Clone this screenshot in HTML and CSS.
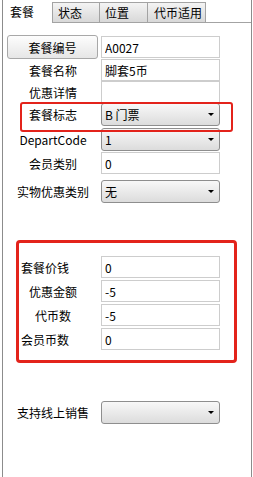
FILE: index.html
```html
<!DOCTYPE html>
<html lang="zh-CN">
<head>
  <meta charset="UTF-8">
  <meta name="viewport" content="width=device-width, initial-scale=1.0">
  <title>套餐</title>
  <link rel="stylesheet" href="styles.css">
</head>
<body>
<div class="frame">
  <div class="tabs">
    <div class="tab active">套餐</div>
    <div class="tab tab-state">状态</div>
    <div class="tab tab-pos">位置</div>
    <div class="tab tab-coin">代币适用</div>
    <div class="tab-rest"></div>
  </div>

  <div class="form">
    <div class="row">
      <button class="btn">套餐编号</button>
      <input class="field" type="text" value="A0027">
    </div>
    <div class="row">
      <label class="lbl">套餐名称</label>
      <input class="field" type="text" value="脚套5币">
    </div>
    <div class="row gap0">
      <label class="lbl">优惠详情</label>
      <input class="field" type="text" value="">
    </div>
    <div class="row sel gap0 marked">
      <label class="lbl">套餐标志</label>
      <div class="select"><span>B 门票</span><i class="arrow"></i></div>
    </div>
    <div class="row sel gap2">
      <label class="lbl">DepartCode</label>
      <div class="select"><span>1</span><i class="arrow"></i></div>
    </div>
    <div class="row">
      <label class="lbl">会员类别</label>
      <input class="field" type="text" value="0">
    </div>
    <div class="row sel gap6">
      <label class="lbl">实物优惠类别</label>
      <div class="select"><span>无</span><i class="arrow"></i></div>
    </div>

    <div class="group">
      <div class="row">
        <label class="lbl left">套餐价钱</label>
        <input class="field" type="text" value="0">
      </div>
      <div class="row">
        <label class="lbl">优惠金额</label>
        <input class="field" type="text" value="-5">
      </div>
      <div class="row">
        <label class="lbl">代币数</label>
        <input class="field" type="text" value="-5">
      </div>
      <div class="row">
        <label class="lbl left">会员币数</label>
        <input class="field" type="text" value="0">
      </div>
    </div>

    <div class="row sel online">
      <label class="lbl">支持线上销售</label>
      <div class="select"><span></span><i class="arrow"></i></div>
    </div>
  </div>
</div>
</body>
</html>
```

FILE: styles.css
```css
*{
  margin: 0;
  padding: 0;
  box-sizing: border-box;
}
body{
  font-family: "Noto Sans CJK SC", "Liberation Sans", sans-serif;
  font-size: 12px;
  color: #000;
  background: #fff;
}
.frame{
  margin-left: 2px;
  width: 250px;
  height: 477px;
  border-left: 1px solid #8c8c8c;
  border-right: 1px solid #8c8c8c;
}

/* tabs */
.tabs{
  display: flex;
  height: 23px;
}
.tab{
  height: 21px;
  margin-top: 2px;
  padding-left: 5px;
  line-height: 20px;
  border: 1px solid #a3a3a3;
  background: linear-gradient(#f4f4f4, #d8d8d8);
  white-space: nowrap;
}
.tab.active{
  width: 49px;
  height: 23px;
  margin-top: 0;
  padding-left: 7px;
  line-height: 23px;
  border: none;
  background: #fff;
}
.tab-state{
  width: 48px;
}
.tab-pos{
  width: 49px;
  margin-left: -1px;
}
.tab-coin{
  width: 59px;
  margin-left: -1px;
  padding-left: 6px;
}
.tab-rest{
  flex: 1;
  border-bottom: 1px solid #a3a3a3;
}

/* form rows */
.form{
  padding-top: 12px;
}
.row{
  display: flex;
  align-items: center;
  height: 22px;
  margin-top: 1px;
}
.row.sel{
  height: 23px;
}
.row.gap0{
  margin-top: 0;
}
.row.gap2{
  margin-top: 2px;
}
.row.gap6{
  margin-top: 6px;
}
.lbl{
  width: 74px;
  margin-left: 13px;
  margin-right: 11px;
  text-align: center;
  white-space: nowrap;
}
.btn{
  width: 91px;
  height: 24px;
  margin-left: 4px;
  margin-right: 3px;
  font: inherit;
  color: #000;
  border: 1px solid #a8a8a8;
  border-radius: 3px;
  background: linear-gradient(#fdfdfd, #e6e6e6);
}
.field{
  width: 119px;
  height: 22px;
  padding: 0 3px;
  font: inherit;
  color: #000;
  border: 1px solid #cdcdcd;
  background: #fff;
  outline: none;
}
.select{
  width: 119px;
  height: 23px;
  display: flex;
  align-items: center;
  justify-content: space-between;
  padding: 0 5px 0 3px;
  border: 1px solid #8e8e8e;
  border-radius: 3px;
  background: linear-gradient(#f8f8f8, #dcdcdc);
}
.arrow{
  width: 0;
  height: 0;
  border-left: 3px solid transparent;
  border-right: 3px solid transparent;
  border-top: 3px solid #000;
}

/* red mark around 套餐标志 */
.marked{
  position: relative;
}
.marked::after{
  content: "";
  position: absolute;
  left: 17px;
  top: -1px;
  width: 209px;
  height: 26px;
  border: 2px solid #e3231b;
  border-radius: 3px;
  pointer-events: none;
}

/* price group */
.group{
  margin: 37px 0 0 13px;
  width: 221px;
  padding: 13px 0 10px 0;
  border: 3px solid #e3231b;
  border-radius: 4px;
}
.group .row{
  margin-top: 2px;
}
.group .row:first-child{
  margin-top: 0;
}
.group .lbl{
  width: 68px;
  margin-left: 0;
  margin-right: 14px;
}
.group .lbl.left{
  text-align: left;
  padding-left: 2px;
}

.row.online{
  margin-top: 38px;
}
```
